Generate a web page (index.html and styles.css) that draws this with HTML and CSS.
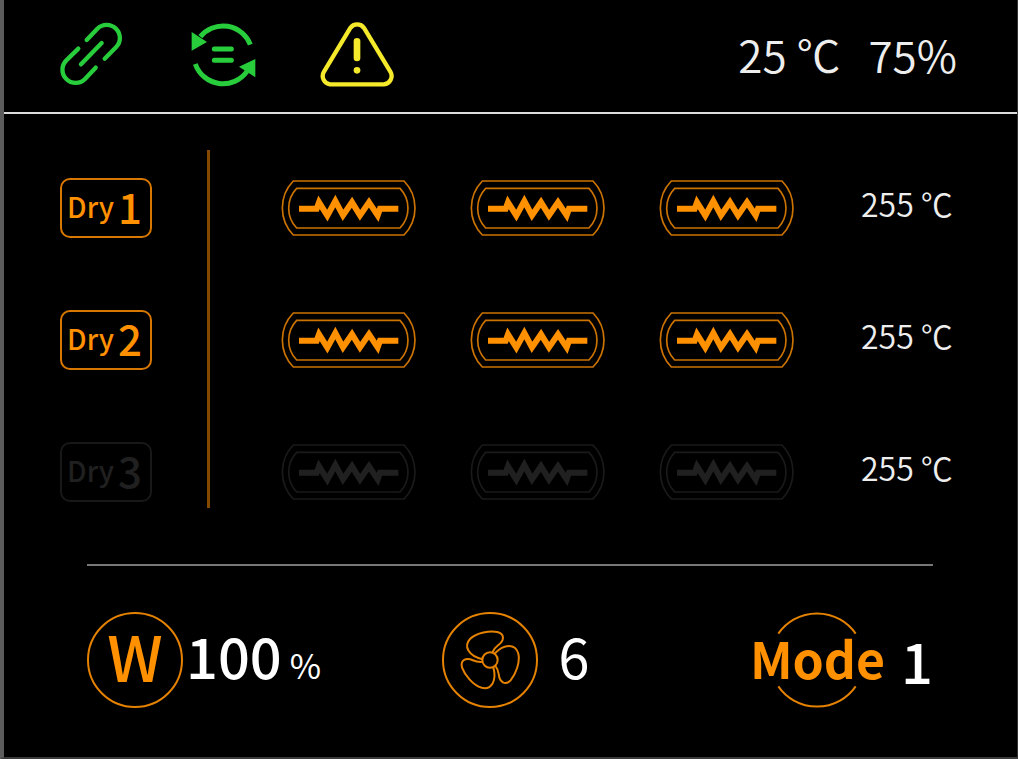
FILE: index.html
```html
<!DOCTYPE html>
<html lang="en">
<head>
<meta charset="utf-8">
<meta name="viewport" content="width=device-width, initial-scale=1">
<title>Dryer control panel</title>
<link rel="stylesheet" href="styles.css">
</head>
<body>
<svg class="defs" aria-hidden="true">
  <symbol id="heater" viewBox="63 57 405 174">
    <g fill="none" stroke="currentColor">
      <path class="heater-line" d="M100 63H432A116 116 0 0 1 432 225H100A116 116 0 0 1 100 63Z"/>
      <path class="heater-line" d="M110 85H420A86 86 0 0 1 420 204H110A86 86 0 0 1 110 85Z"/>
      <path stroke-width="18" stroke-miterlimit="10" d="M117 146H170L177 127L202 167L226 123L249 166L276 127L300 166L327 127L353 166L360 146H415"/>
    </g>
  </symbol>
</svg>
<div class="panel">
  <header class="status">
    <div class="status-icons">
      <svg class="icon-link" viewBox="60 60 192 198" role="img" aria-label="Linked">
        <g fill="none" stroke="currentColor" stroke-width="13" stroke-linecap="round">
          <path d="M140 117L172 83A39 39 0 0 1 228 139L194 173"/>
          <path d="M115 143L79 178A39 39 0 0 0 135 234L167 200"/>
          <path d="M123 190L185 126"/>
        </g>
      </svg>
      <svg class="icon-sync" viewBox="456 60 195 204" role="img" aria-label="Syncing">
        <g fill="none" stroke="currentColor" stroke-width="15">
          <path d="M634 134A88 88 0 0 0 484 110"/>
          <path d="M469 192A88 88 0 0 0 624 214"/>
          <path stroke-linecap="round" d="M526 147H577M526 181H577"/>
        </g>
        <path fill="currentColor" d="M458 96L504 126L458 152ZM649 177V232L600 200Z"/>
      </svg>
      <svg class="icon-warning" viewBox="120 60 225 204" role="img" aria-label="Warning">
        <path fill="none" stroke="currentColor" stroke-width="13" d="M211 84A25 25 0 0 1 252 84L331 215A25 25 0 0 1 312 253H150A25 25 0 0 1 132 215Z"/>
        <path fill="none" stroke="currentColor" stroke-width="20" stroke-linecap="round" d="M231 124V174"/>
        <circle cx="231" cy="211" r="10" fill="currentColor"/>
      </svg>
    </div>
    <div class="climate"><span>25 ℃</span><span>75%</span></div>
  </header>

  <main class="dryers">
    <div class="badges">
      <div class="badge"><span>Dry</span><b>1</b></div>
      <div class="badge"><span>Dry</span><b>2</b></div>
      <div class="badge off"><span>Dry</span><b>3</b></div>
    </div>
    <div class="rows">
      <div class="row">
        <svg class="heater"><use href="#heater"/></svg>
        <svg class="heater"><use href="#heater"/></svg>
        <svg class="heater"><use href="#heater"/></svg>
        <span class="temp">255 ℃</span>
      </div>
      <div class="row">
        <svg class="heater"><use href="#heater"/></svg>
        <svg class="heater"><use href="#heater"/></svg>
        <svg class="heater"><use href="#heater"/></svg>
        <span class="temp">255 ℃</span>
      </div>
      <div class="row">
        <svg class="heater off"><use href="#heater"/></svg>
        <svg class="heater off"><use href="#heater"/></svg>
        <svg class="heater off"><use href="#heater"/></svg>
        <span class="temp">255 ℃</span>
      </div>
    </div>
  </main>

  <footer class="settings">
    <div class="setting power">
      <span class="ring">W</span>
      <span class="reading"><span class="value">100</span><span class="unit">%</span></span>
    </div>
    <div class="setting fan">
      <svg class="dial" viewBox="71 64 288 288" role="img" aria-label="Fan">
        <g fill="none" stroke="currentColor" stroke-width="6">
          <circle cx="215" cy="208" r="141"/>
          <circle cx="215" cy="208" r="23"/>
          <path id="blade" d="M192 206C150 195 135 167 155 145C175 125 215 120 237 124C260 130 258 150 240 163C228 172 224 180 221 187"/>
          <use href="#blade" transform="rotate(120 215 208)"/>
          <use href="#blade" transform="rotate(240 215 208)"/>
        </g>
      </svg>
      <span class="reading"><span class="value">6</span></span>
    </div>
    <div class="setting mode">
      <span class="mode-mark">
        <svg class="dial" viewBox="0 0 288 288" aria-hidden="true">
          <path fill="none" stroke="currentColor" stroke-width="6" d="M28 65A141 141 0 0 1 260 65M28 223A141 141 0 0 0 260 223"/>
        </svg>
        <span class="mode-name">Mode</span>
      </span>
      <span class="value">1</span>
    </div>
  </footer>
</div>
</body>
</html>
```
FILE: styles.css
```css
* { box-sizing: border-box; }

body {
  margin: 0;
  background: #000;
  color: #fff;
  font-family: "Noto Sans CJK SC", "Noto Sans", sans-serif;
}

svg { display: block; }
.defs { position: absolute; width: 0; height: 0; }

.panel {
  display: flex;
  flex-direction: column;
  min-height: 100vh;
  border-left: 4px solid #5c5c5c;
  border-right: 1px solid #333;
  border-bottom: 2px solid #3a3a3a;
}

.status {
  display: flex;
  justify-content: space-between;
  align-items: center;
  height: 114px;
  padding: 0 60px 4px 56px;
  border-bottom: 2px solid #ddd;
}
.status-icons { display: flex; align-items: center; gap: 64px; color: #28cd3c; }
.icon-link { width: 64px; height: 66px; margin-right: 3px; }
.icon-sync { width: 65px; height: 68px; }
.icon-warning { width: 75px; height: 68px; color: #f5e92b; }
.climate { display: flex; gap: 28px; font-size: 44px; font-weight: 350; line-height: 64px; color: #eee; }

.dryers { display: flex; margin: 36px 64px 0 56px; }
.badges, .rows { display: grid; gap: 72px; padding: 28px 0 6px; }
.badges { padding-right: 55px; border-right: 3px solid #854900; }
.rows { flex: 1; padding-left: 71px; }

.badge {
  display: flex;
  justify-content: center;
  align-items: center;
  gap: 4px;
  width: 92px;
  height: 60px;
  padding: 0 3px 5px 0;
  border: 2px solid #d97800;
  border-radius: 10px;
  color: #ff9000;
  font-size: 28px;
  font-weight: 500;
  line-height: 48px;
}
.badge b { font-size: 42px; font-weight: 500; }
.badge.off { border-color: #181818; color: #202020; }

.row {
  display: grid;
  grid-template-columns: repeat(3, 1fr) 105px;
  align-items: center;
  height: 60px;
}
.heater { width: 135px; height: 58px; color: #ff9000; }
.heater-line { stroke-width: 5px; opacity: 0.8; }
.heater.off { color: #202020; }
.temp {
  padding: 0 0 10px 13px;
  color: #eee;
  font-size: 32px;
  font-weight: 350;
  line-height: 48px;
  white-space: nowrap;
}

.settings {
  display: grid;
  grid-template-columns: 356fr 308fr 182fr;
  align-items: center;
  margin: 56px 84px 0 83px;
  padding-top: 46px;
  border-top: 2px solid #777;
}
.setting { display: flex; align-items: center; }
.reading { display: flex; align-items: baseline; gap: 8px; padding-bottom: 10px; }
.value { font-size: 56px; font-weight: 500; line-height: 80px; }
.unit { font-size: 34px; line-height: 48px; }
.ring {
  display: grid;
  place-items: center;
  width: 96px;
  height: 96px;
  padding-bottom: 10px;
  border: 2px solid #e58200;
  border-radius: 50%;
  color: #ff9000;
  font-size: 62px;
  font-weight: 500;
  line-height: 80px;
}
.dial { width: 96px; height: 96px; color: #e58200; }
.power { gap: 3px; }
.fan { gap: 20px; }
.fan .value { font-weight: 400; }
.mode { gap: 16px; }
.mode-mark { display: grid; place-items: center; }
.mode-mark > * { grid-area: 1 / 1; }
.mode-name { padding-bottom: 7px; color: #ff9000; font-size: 50px; font-weight: 700; line-height: 80px; }
```
